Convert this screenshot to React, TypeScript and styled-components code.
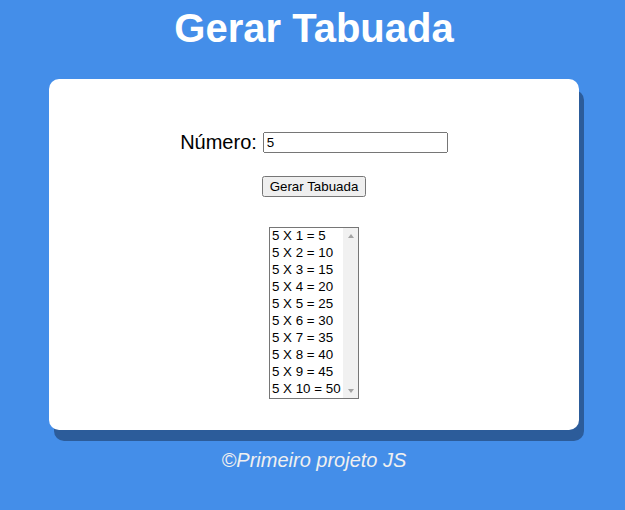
import React, { useState } from "react";
import styled, { createGlobalStyle } from "styled-components";

const Global = createGlobalStyle`
  html, body { margin: 0; padding: 0; }
  body {
    background: #448ee9;
    font-family: "Liberation Sans", Arial, sans-serif;
    min-height: 510px;
  }
`;

const Page = styled.div`
  display: flex;
  flex-direction: column;
  align-items: center;
  padding-left: 3px;
`;

const Title = styled.h1`
  margin: 5px 0 0;
  font-size: 40px;
  line-height: 46px;
  font-weight: bold;
  color: #ffffff;
`;

const Card = styled.section`
  box-sizing: border-box;
  width: 530px;
  height: 351px;
  margin-top: 28px;
  background: #ffffff;
  border-radius: 10px;
  box-shadow: 5px 11px 0 #2c5c9a;
  display: flex;
  flex-direction: column;
  align-items: center;
  padding-top: 52px;
`;

const Row = styled.div`
  display: flex;
  align-items: center;
  gap: 6px;
  height: 23px;
`;

const Label = styled.label`
  font-size: 20px;
  color: #000;
`;

const NumberInput = styled.input`
  box-sizing: border-box;
  width: 185px;
  height: 21px;
  font-family: "Liberation Sans", Arial, sans-serif;
  font-size: 13.333px;
  margin-top: -1px;
`;

const Button = styled.button`
  margin-top: 22px;
  font-family: "Liberation Sans", Arial, sans-serif;
  font-size: 13.333px;
`;

const ListBox = styled.div`
  box-sizing: border-box;
  margin-top: 30px;
  width: 90px;
  height: 172px;
  border: 1px solid #767676;
  display: flex;
  background: #fff;
  font-family: "Liberation Sans", Arial, sans-serif;
  font-size: 13.333px;
  color: #000;
`;

const Options = styled.div`
  flex: 1;
  min-width: 0;
`;

const Option = styled.div`
  padding: 0 2px 1px;
  line-height: 16px;
  white-space: nowrap;
  cursor: default;
`;

const ScrollTrack = styled.div`
  width: 15px;
  flex: none;
  background: #f1f1f1;
  display: flex;
  flex-direction: column;
  justify-content: space-between;
`;

const ArrowButton = styled.div`
  height: 15px;
  display: flex;
  align-items: center;
  justify-content: center;
`;

const Triangle = styled.span<{ $down?: boolean }>`
  width: 0;
  height: 0;
  border-left: 3.5px solid transparent;
  border-right: 3.5px solid transparent;
  ${(p) => (p.$down ? "border-top: 4px solid #a3a3a3;" : "border-bottom: 4px solid #a3a3a3;")}
`;

const Footer = styled.p`
  margin: 19px 0 0;
  font-size: 20px;
  font-style: italic;
  color: #f0f0f0;
`;

export default function App() {
  const [num, setNum] = useState("5");
  const n = Number(num) || 0;
  const rows = Array.from({ length: 10 }, (_, i) => `${n} X ${i + 1} = ${n * (i + 1)}`);
  return (
    <Page>
      <Global />
      <Title>Gerar Tabuada</Title>
      <Card>
        <Row>
          <Label htmlFor="num">Número:</Label>
          <NumberInput id="num" value={num} onChange={(e) => setNum(e.target.value)} />
        </Row>
        <Button type="button">Gerar Tabuada</Button>
        <ListBox role="listbox">
          <Options>
            {rows.map((r) => (
              <Option role="option" key={r}>{r}</Option>
            ))}
          </Options>
          <ScrollTrack aria-hidden="true">
            <ArrowButton><Triangle /></ArrowButton>
            <ArrowButton><Triangle $down /></ArrowButton>
          </ScrollTrack>
        </ListBox>
      </Card>
      <Footer>©Primeiro projeto JS</Footer>
    </Page>
  );
}
